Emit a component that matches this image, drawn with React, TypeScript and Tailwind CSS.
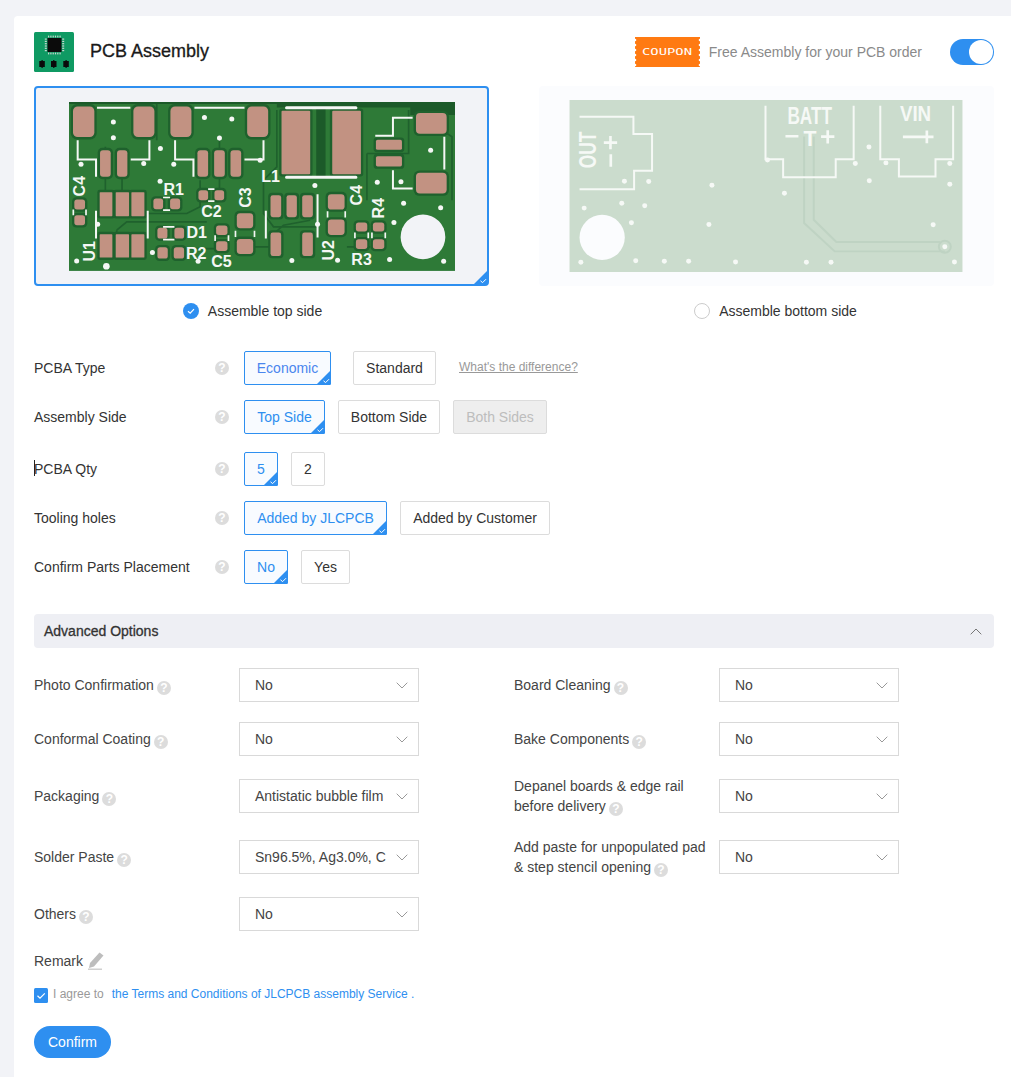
import type { ReactNode } from "react";

const PAD = "#c29282";

// [x1, y1, x2, y2, radius], in the board's 3x coordinates
const topPads: number[][] = [
  [219, 319, 283, 411, 14], [400, 319, 463, 411, 14], [511, 319, 574, 411, 14], [741, 319, 804, 411, 14],
  [844, 332, 930, 522, 3], [996, 332, 1082, 522, 3],
  [1247, 339, 1339, 401, 12], [1247, 518, 1339, 580, 12],
  [1127, 419, 1205, 449, 5], [1127, 468, 1205, 499, 5],
  [300, 450, 332, 530, 9], [351, 450, 382, 530, 9],
  [592, 450, 624, 530, 9], [642, 450, 674, 530, 9], [691, 450, 723, 530, 9],
  [299, 576, 337, 648, 2], [347, 576, 387, 648, 2], [394, 576, 433, 648, 2],
  [299, 702, 337, 772, 2], [347, 702, 387, 772, 2], [394, 702, 433, 772, 2],
  [223, 598, 255, 628, 8], [223, 645, 255, 675, 8],
  [460, 595, 489, 627, 8], [510, 595, 540, 627, 8],
  [595, 570, 624, 600, 8], [643, 570, 672, 600, 8],
  [710, 639, 759, 684, 10], [710, 716, 759, 761, 10],
  [472, 683, 502, 715, 8], [523, 683, 552, 715, 8],
  [472, 741, 503, 775, 8], [521, 741, 552, 775, 8],
  [648, 676, 682, 704, 8], [648, 723, 682, 752, 8],
  [811, 585, 843, 651, 7], [859, 585, 890, 651, 7], [906, 585, 938, 651, 7],
  [811, 697, 843, 767, 7], [906, 697, 938, 767, 7],
  [983, 582, 1033, 628, 10], [983, 658, 1033, 704, 10],
  [1067, 667, 1101, 694, 8], [1067, 717, 1101, 746, 8],
  [1118, 667, 1152, 694, 8], [1118, 717, 1152, 746, 8],
];

const topTracks = [
  "M470 312V420M316 440V600M366 530V590M658 410V450M658 530V570",
  "M830 330V500L790 540V640L820 680H950M1100 460V600",
  "M350 690L380 665H620M350 770V690M440 640H560L600 620V540",
  "M810 710L850 675L930 660M1040 740H1110",
  "M760 740H810M1340 400L1355 410V600M560 745H650M1225 330V460H1100",
];

const topSilk = [
  "M291 323H391M583 323H733",
  "M233 420V478H288V530M448 420V478H392",
  "M525 420V478H580V530M790 420V478H733",
  "M1125 407H1178V353H1237M1178 510V565H1237M1332 410V508",
  "M443 632V715M288 632V715M797 632V715M952 582V712",
];

const topTicks = [
  "M489 592H510M489 630H510M489 680H523M489 718H523",
  "M624 567H643M624 603H643",
  "M220 628V645M258 628V645M645 705V722M685 705V722",
  "M706 692V710M763 692V710M982 633V652M1035 633V652",
  "M1064 697V714M1104 697V714M1115 697V714M1155 697V714",
];

const topDots = [
  [340, 366], [340, 413], [481, 445], [243, 492], [431, 490], [521, 492], [613, 352], [695, 357], [658, 414],
  [780, 480], [480, 543], [1291, 450], [1131, 546], [1202, 545], [944, 556], [1210, 609], [1321, 623],
  [1181, 667], [1168, 778], [1330, 783], [1012, 780], [875, 781], [594, 783], [457, 757], [230, 782], [293, 672], [952, 672],
];

const topLabels: [string, number, number, number][] = [
  ["C4", 254, 558, -90], ["R1", 521, 583, 0], ["C2", 634, 650, 0], ["C3", 754, 592, -90], ["L1", 811, 545, 0],
  ["D1", 590, 714, 0], ["R2", 588, 775, 0], ["C5", 664, 801, 0], ["U1", 285, 753, -90], ["U2", 1000, 750, -90],
  ["C4", 1085, 585, -90], ["R4", 1152, 624, -90], ["R3", 1084, 795, 0],
];

const bottomDots = [
  [313, 484], [386, 485], [576, 496], [794, 520], [1007, 431], [1048, 381], [1049, 483], [1099, 429], [1291, 431],
  [1291, 493], [743, 420], [192, 565], [305, 550], [374, 558], [334, 609], [567, 614], [1241, 615], [1276, 681],
  [182, 728], [347, 723], [433, 725], [506, 725], [647, 727], [860, 728], [934, 728], [1305, 727],
];

function TopBoard() {
  return (
    <svg viewBox="207 306 1157 506" className="block w-[386px] h-[169px]">
      <rect x="207" y="306" width="1157" height="506" fill="#2e7a37" />
      <path d="M207 306H1364V345H1230V322H830V312H207Z" fill="#1c5a29" />
      <rect x="948" y="325" width="28" height="210" fill="#1c5a29" />
      <path d={topTracks.join("")} fill="none" stroke="#1f612d" strokeWidth="5" />
      {topPads.map(([x1, y1, x2, y2, r], i) => (
        <rect key={i} x={x1 - 7} y={y1 - 7} width={x2 - x1 + 14} height={y2 - y1 + 14} rx={r + 5} fill="#1f612d" />
      ))}
      {topPads.map(([x1, y1, x2, y2, r], i) => (
        <rect key={i} x={x1} y={y1} width={x2 - x1} height={y2 - y1} rx={r} fill={PAD} />
      ))}
      <path d="M859 323H1067M859 531H1067" stroke="#f5f7f5" strokeWidth="9" strokeLinecap="round" />
      <path d={topSilk.join("")} fill="none" stroke="#f5f7f5" strokeWidth="6" />
      <path d={topTicks.join("")} fill="none" stroke="#f5f7f5" strokeWidth="5" />
      {topDots.map(([x, y], i) => (
        <circle key={i} cx={x} cy={y} r="7.5" fill="#f5f7f5" />
      ))}
      <circle cx="319" cy="798" r="10" fill="#f5f7f5" />
      <circle cx="1268" cy="710" r="67" fill="#f2f3f7" />
      {topLabels.map(([t, x, y, r], i) => (
        <text
          key={i}
          x={x}
          y={y}
          transform={r ? `rotate(${r} ${x} ${y})` : undefined}
          textAnchor="middle"
          fontSize="48"
          fontWeight="700"
          fontFamily="Liberation Sans, sans-serif"
          fill="#f5f7f5"
        >
          {t}
        </text>
      ))}
    </svg>
  );
}

function BottomBoard() {
  const silk = "#f6f9f6";
  const font = "Liberation Sans, sans-serif";
  return (
    <svg viewBox="148 240 1181 517" className="block w-[394px] h-[172px] mr-[2px]">
      <rect x="148" y="240" width="1181" height="517" fill="#cbdccd" />
      <path
        d="M853 350V610L945 695H1276M882 350V600L950 667H1262"
        fill="none"
        stroke="#bfd3c3"
        strokeWidth="6"
      />
      <circle cx="1276" cy="681" r="18" fill="none" stroke="#bfd3c3" strokeWidth="6" />
      <path
        d="M178 290H340V342H396V453H342V508H178M737 257V418H790V472H948V418H1002V257M1082 257V418H1138V470H1248V418H1301V257"
        fill="none"
        stroke={silk}
        strokeWidth="6"
      />
      <path
        d="M251 368H291M271 348V388M272 403V441M797 349H836M904 350H944M924 331V371M1150 351H1204M1204 351H1242M1222 332V370"
        stroke={silk}
        strokeWidth="8"
      />
      {bottomDots.map(([x, y], i) => (
        <circle key={i} cx={x} cy={y} r="7.5" fill={silk} />
      ))}
      <circle cx="246" cy="653" r="68" fill="#fbfcfe" />
      <text x="228" y="390" transform="rotate(-90 228 390)" textAnchor="middle" fontSize="72" fontWeight="700" fontFamily={font} textLength="110" lengthAdjust="spacingAndGlyphs" fill={silk}>
        OUT
      </text>
      <text x="870" y="312" textAnchor="middle" fontSize="70" fontWeight="700" fontFamily={font} textLength="134" lengthAdjust="spacingAndGlyphs" fill={silk}>
        BATT
      </text>
      <text x="871" y="378" textAnchor="middle" fontSize="64" fontWeight="700" fontFamily={font} fill={silk}>
        T
      </text>
      <text x="1188" y="303" textAnchor="middle" fontSize="68" fontWeight="700" fontFamily={font} textLength="94" lengthAdjust="spacingAndGlyphs" fill={silk}>
        VIN
      </text>
    </svg>
  );
}

function ChipLogo() {
  const pins = [0, 1, 2, 3, 4, 5];
  return (
    <svg viewBox="0 0 40 40" className="w-10 h-10 shrink-0">
      <rect width="40" height="40" rx="1.5" fill="#0f9a63" />
      <rect x="13.5" y="6" width="14" height="14" fill="#0b0b0b" />
      {pins.map((i) => (
        <g key={i} fill="#c9d6cf">
          <rect x={14 + i * 2.3} y="3.6" width="1.2" height="1.8" />
          <rect x={14 + i * 2.3} y="20.6" width="1.2" height="1.8" />
          <rect x="10.8" y={6.5 + i * 2.3} width="2" height="1.2" />
          <rect x="28.2" y={6.5 + i * 2.3} width="2" height="1.2" />
        </g>
      ))}
      {[5.3, 17, 29.3].map((x) => (
        <g key={x} fill="#0b0b0b">
          <rect x={x} y="29" width="5.5" height="6" />
          <rect x={x + 2.2} y="28" width="1.2" height="8" />
        </g>
      ))}
    </svg>
  );
}

function CouponBadge() {
  const notches = [3, 8, 13, 18, 23, 28];
  return (
    <svg viewBox="0 0 65 30" className="w-[65px] h-[30px] shrink-0">
      <rect width="65" height="30" fill="#ff7a12" />
      {notches.map((y) => (
        <g key={y} fill="#ffffff">
          <circle cx="0" cy={y} r="1.3" />
          <circle cx="65" cy={y} r="1.3" />
        </g>
      ))}
      <text
        x="7"
        y="18"
        fontSize="8"
        fontFamily="DejaVu Sans Mono, monospace"
        textLength="50"
        lengthAdjust="spacingAndGlyphs"
        fill="#ffffff"
      >
        COUPON
      </text>
    </svg>
  );
}

function HelpIcon({ className = "" }: { className?: string }) {
  return (
    <span
      className={`inline-flex w-[14px] h-[14px] rounded-full bg-[#dcdcdc] text-white text-xs font-bold leading-none items-center justify-center ${className}`}
    >
      ?
    </span>
  );
}

function CornerCheck() {
  return (
    <svg viewBox="0 0 15 15" className="absolute right-[-1px] bottom-[-1px] w-[15px] h-[15px]">
      <path d="M15 0V13.5A1.5 1.5 0 0 1 13.5 15H0Z" fill="#2e8ff0" />
      <path d="M7.5 10.8L9.6 12.6L13 9.2" fill="none" stroke="#fff" strokeWidth="1" />
    </svg>
  );
}

function Option({
  label,
  selected,
  disabled,
  className = "",
}: {
  label: string;
  selected?: boolean;
  disabled?: boolean;
  className?: string;
}) {
  let tone = "border-[#dcdcdc] bg-white text-[#333]";
  if (selected) tone = "border-[#2e8ff0] bg-[#f8fbff] text-[#2e8ff0]";
  if (disabled) tone = "border-[#dcdcdc] bg-[#eeeeee] text-[#bdbdbd]";
  return (
    <div className={`relative h-[34px] border rounded-[2px] flex items-center justify-center text-sm ${tone} ${className}`}>
      {label}
      {selected && <CornerCheck />}
    </div>
  );
}

function FormRow({ label, className = "", children }: { label: ReactNode; className?: string; children: ReactNode }) {
  return (
    <div className={`flex items-center h-[34px] ${className}`}>
      <div className="w-[181px] text-sm text-[#333]">{label}</div>
      <HelpIcon />
      <div className="ml-[15px] flex items-center">{children}</div>
    </div>
  );
}

function SelectBox({ value }: { value: string }) {
  return (
    <div className="w-[180px] h-[34px] shrink-0 border border-[#d9d9d9] bg-white pl-[15px] pr-[10px] flex items-center justify-between text-sm text-[#444]">
      <span className="whitespace-nowrap">{value}</span>
      <svg viewBox="0 0 12 7" className="w-3 h-[7px] shrink-0">
        <path d="M0.7 0.7L6 6L11.3 0.7" fill="none" stroke="#999" strokeWidth="1" />
      </svg>
    </div>
  );
}

function AdvancedField({ label, value }: { label: ReactNode; value: string }) {
  return (
    <div className="flex items-center h-[34px]">
      <div className="w-[205px] pr-2 text-sm leading-5 text-[#444]">
        {label}
        <HelpIcon className="ml-[3px] align-[-2px]" />
      </div>
      <SelectBox value={value} />
    </div>
  );
}

export default function App() {
  return (
    <div className="min-h-[1077px] bg-[#f2f3f7] pt-4 pl-[14px] overflow-hidden font-['Liberation_Sans',Arial,sans-serif]">
      <div className="min-h-[1061px] bg-white rounded-tl-[4px] pt-4 pl-5 pr-[17px]">
        {/* Header */}
        <div className="flex items-center h-10">
          <ChipLogo />
          <h1 className="ml-4 mb-[2px] text-lg text-[#1a1a1a] [-webkit-text-stroke:0.3px_#1a1a1a]">PCB Assembly</h1>
          <div className="ml-auto flex items-center">
            <CouponBadge />
            <span className="ml-[9px] text-sm text-[#8a8a8a]">Free Assembly for your PCB order</span>
            <div className="ml-7 w-11 h-[26px] rounded-full bg-[#2e8ff0] flex items-center justify-end pr-[1px]">
              <div className="w-6 h-6 rounded-full bg-white" />
            </div>
          </div>
        </div>

        {/* Board sides */}
        <div className="mt-[14px] grid grid-cols-2 gap-x-[50px]">
          <div>
            <div className="relative h-[200px] border-2 border-[#2e8ff0] rounded-[4px] bg-[#f2f3f7] flex items-center justify-center">
              <TopBoard />
              <CornerCheck />
            </div>
            <div className="mt-[17px] h-4 pr-[18px] flex items-center justify-center gap-[9px] text-sm text-[#333]">
              <svg viewBox="0 0 16 16" className="w-4 h-4">
                <circle cx="8" cy="8" r="8" fill="#2e8ff0" />
                <path d="M5 8.2L7.2 10.2L11 6.2" fill="none" stroke="#fff" strokeWidth="1.2" />
              </svg>
              Assemble top side
            </div>
          </div>
          <div>
            <div className="h-[200px] rounded-[4px] bg-[#fbfcfe] flex items-center justify-center">
              <BottomBoard />
            </div>
            <div className="mt-[17px] h-4 pl-[18px] flex items-center justify-center gap-[9px] text-sm text-[#333]">
              <span className="w-4 h-4 rounded-full border border-[#cccccc]" />
              Assemble bottom side
            </div>
          </div>
        </div>

        {/* Assembly options */}
        <FormRow label="PCBA Type" className="mt-[32px]">
          <Option label="Economic" selected className="w-[87px] text-[#4a86ee]!" />
          <Option label="Standard" className="ml-[22px] w-[83px]" />
          <span className="ml-[23px] mb-[3px] text-xs text-[#999] underline">What's the difference?</span>
        </FormRow>
        <FormRow label="Assembly Side" className="mt-[15px]">
          <Option label="Top Side" selected className="w-[81px]" />
          <Option label="Bottom Side" className="ml-[13px] w-[102px]" />
          <Option label="Both Sides" disabled className="ml-[13px] w-[94px]" />
        </FormRow>
        <FormRow
          label={
            <span className="relative">
              <span className="absolute left-0 top-[-1px] h-4 w-px bg-[#222]" />
              PCBA Qty
            </span>
          }
          className="mt-[18px]"
        >
          <Option label="5" selected className="w-[34px]" />
          <Option label="2" className="ml-[13px] w-[34px]" />
        </FormRow>
        <FormRow label="Tooling holes" className="mt-[15px]">
          <Option label="Added by JLCPCB" selected className="w-[143px]" />
          <Option label="Added by Customer" className="ml-[13px] w-[150px]" />
        </FormRow>
        <FormRow label="Confirm Parts Placement" className="mt-[15px]">
          <Option label="No" selected className="w-[44px]" />
          <Option label="Yes" className="ml-[13px] w-[49px]" />
        </FormRow>

        {/* Advanced options */}
        <div className="mt-[30px] h-[34px] rounded-[4px] bg-[#eeeff4] pl-[10px] pr-3 flex items-center justify-between">
          <span className="text-sm text-[#333] [-webkit-text-stroke:0.3px_#333]">Advanced Options</span>
          <svg viewBox="0 0 12 7" className="w-3 h-[7px]">
            <path d="M0.7 6.3L6 1L11.3 6.3" fill="none" stroke="#777" strokeWidth="1" />
          </svg>
        </div>

        <div className="mt-5 grid grid-cols-[480px_1fr]">
          <AdvancedField label="Photo Confirmation" value="No" />
          <AdvancedField label="Board Cleaning" value="No" />
          <div className="mt-5">
            <AdvancedField label="Conformal Coating" value="No" />
          </div>
          <div className="mt-5">
            <AdvancedField label="Bake Components" value="No" />
          </div>
          <div className="mt-[23px]">
            <AdvancedField label="Packaging" value="Antistatic bubble film" />
          </div>
          <div className="mt-[23px]">
            <AdvancedField
              label={
                <>
                  Depanel boards &amp; edge rail
                  <br />
                  before delivery
                </>
              }
              value="No"
            />
          </div>
          <div className="mt-[27px]">
            <AdvancedField label="Solder Paste" value="Sn96.5%, Ag3.0%, C" />
          </div>
          <div className="mt-[27px]">
            <AdvancedField
              label={
                <>
                  Add paste for unpopulated pad
                  <br />
                  &amp; step stencil opening
                </>
              }
              value="No"
            />
          </div>
          <div className="mt-[23px]">
            <AdvancedField label="Others" value="No" />
          </div>
        </div>

        {/* Remark and submit */}
        <div className="mt-5 h-5 flex items-center gap-[5px] text-sm text-[#444]">
          Remark
          <svg viewBox="0 0 16 18" className="w-4 h-[18px]">
            <path d="M11.5 0.5L15.5 3.5L6 14.5L1 16L2 11Z" fill="#bdbdbd" />
            <rect x="0" y="16.5" width="14" height="1.5" fill="#d0d0d0" />
          </svg>
        </div>
        <div className="mt-[17px] h-[15px] flex items-center text-xs">
          <svg viewBox="0 0 14 15" className="w-[14px] h-[15px] shrink-0">
            <rect width="14" height="15" rx="1.5" fill="#2e8ff0" />
            <path d="M3.5 7.8L6 10.2L10.8 5.4" fill="none" stroke="#fff" strokeWidth="1.2" />
          </svg>
          <span className="ml-[5px] mb-[3px] text-[#999]">I agree to</span>
          <span className="ml-2 mb-[3px] text-[#2e8ff0]">the Terms and Conditions of JLCPCB assembly Service .</span>
        </div>
        <button className="mt-[23px] w-[77px] h-8 rounded-full bg-[#2e8ff0] text-white text-sm">Confirm</button>
      </div>
    </div>
  );
}
